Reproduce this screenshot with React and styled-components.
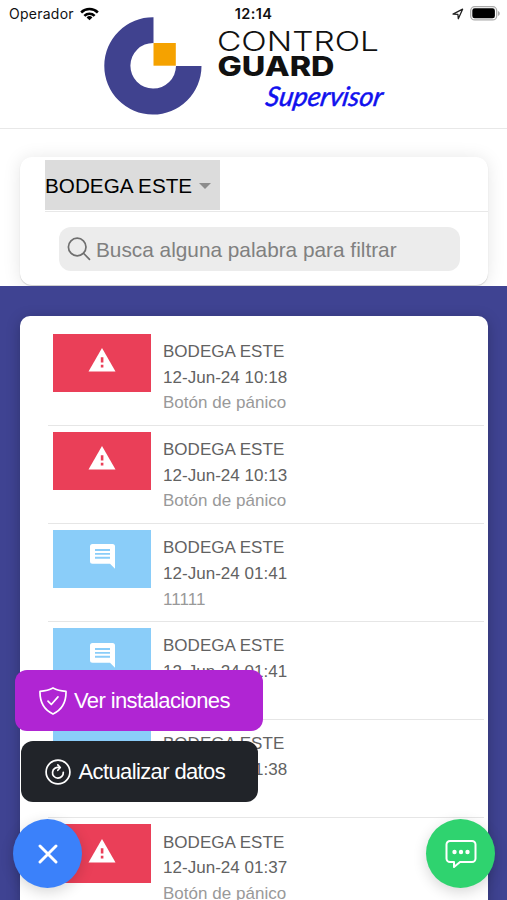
import { useState } from "react";
import styled, { createGlobalStyle } from "styled-components";

const alerts = [
  { id: 1, type: "panic", place: "BODEGA ESTE", date: "12-Jun-24 10:18", text: "Botón de pánico" },
  { id: 2, type: "panic", place: "BODEGA ESTE", date: "12-Jun-24 10:13", text: "Botón de pánico" },
  { id: 3, type: "note", place: "BODEGA ESTE", date: "12-Jun-24 01:41", text: "11111" },
  { id: 4, type: "note", place: "BODEGA ESTE", date: "12-Jun-24 01:41", text: "" },
  { id: 5, type: "note", place: "BODEGA ESTE", date: "12-Jun-24 01:38", text: "" },
  { id: 6, type: "panic", place: "BODEGA ESTE", date: "12-Jun-24 01:37", text: "Botón de pánico" },
];

const WifiIcon = () => (
  <svg width="19" height="14" viewBox="0 0 20 14">
    <g fill="none" stroke="#000" strokeWidth="2.7">
      <path d="M1.2 5.4a12.6 12.6 0 0 1 17.6 0" />
      <path d="M4.6 8.900a7.800 7.800 0 0 1 10.800 0" />
    </g>
    <path d="M10 13.600 6.900 10.600a4.400 4.400 0 0 1 6.200 0z" />
  </svg>
);

const LocationIcon = () => (
  <svg width="12" height="12" viewBox="0 0 12 12">
    <path
      d="M1 6.1 10.6 1.2 6.3 10.7 5.9 6.3z"
      fill="none"
      stroke="#222"
      strokeWidth="1.3"
      strokeLinejoin="round"
    />
  </svg>
);

const BatteryIcon = () => (
  <svg width="30" height="15" viewBox="0 0 30 15">
    <rect x="0.7" y="0.7" width="26" height="13.2" rx="4" fill="#fff" stroke="#aaa" strokeWidth="1.3" />
    <rect x="2.3" y="2.3" width="22.6" height="10" rx="2.4" />
    <path d="M28 5v5c1.100-.4 1.800-1.400 1.800-2.500S29.100 5.400 28 5z" fill="#aaa" />
  </svg>
);

const Logo = () => (
  <svg width="300" height="104" viewBox="104 16 300 104">
    <path
      d="M153.500 17.300A48.600 48.600 0 1 0 201.500 66H176A22.800 22.800 0 1 1 153.500 43z"
      fill="#40428f"
    />
    <rect x="153.500" y="43" width="22.300" height="22.700" fill="#f5a200" />
    <LogoText x="217" y="51.300" fontSize="27.500" fontWeight="300" textLength="162">
      CONTROL
    </LogoText>
    <LogoText x="217.500" y="76.300" fontSize="26.500" fontWeight="800" textLength="117">
      GUARD
    </LogoText>
    <LogoScript x="0" y="0" textLength="117" transform="translate(264.500 105.500) skewX(-10)">
      Supervisor
    </LogoScript>
  </svg>
);

const SearchIcon = () => (
  <svg width="24" height="24" viewBox="0 0 24 24" fill="none" stroke="#6f6f6f" strokeWidth="1.7" strokeLinecap="round">
    <circle cx="10.200" cy="10" r="8.800" />
    <path d="M16.700 16.500 22.500 22.300" />
  </svg>
);

const WarningIcon = () => (
  <svg width="28" height="24" viewBox="0 0 28 24">
    <path d="M14 0 27.500 23.600H.5z" fill="#fff" />
    <path d="M12.800 9.300h2.600v5.100h-2.600zM12.800 16.800h2.600v2.700h-2.600z" fill="#ea3f58" />
  </svg>
);

const CommentIcon = () => (
  <svg width="25" height="25" viewBox="0 0 25 25">
    <path d="M2.500 0h20A2.500 2.500 0 0 1 25 2.500V24.700L20 19.800H2.500A2.500 2.500 0 0 1 0 17.300V2.500A2.500 2.500 0 0 1 2.500 0z" fill="#fff" />
    <path d="M5 6h15M5 9.900h15M5 13.700h15" stroke="#8acdf9" strokeWidth="1.900" />
  </svg>
);

const ShieldIcon = () => (
  <svg width="28" height="28" viewBox="0 0 28 28" fill="none" stroke="#fff" strokeWidth="1.700" strokeLinecap="round" strokeLinejoin="round">
    <path d="M14 .9C10.500 2.800 5.800 3.900 1 4.300.700 15.200 4.500 22.600 14 27.100 23.500 22.600 27.300 15.200 27 4.300 22.200 3.900 17.500 2.800 14 .9z" />
    <path d="M9 14.100 12.300 17.500 19 9.900" />
  </svg>
);

const ReloadIcon = () => (
  <svg width="26" height="26" viewBox="0 0 26 26" fill="none" stroke="#fff" strokeWidth="1.700" strokeLinecap="round">
    <circle cx="13" cy="13" r="11.900" />
    <path d="M18.300 13.300A5.400 5.400 0 1 1 14.200 8.500" />
    <path d="M12.800 5.800 15.300 8.500 12.800 11.300" strokeLinejoin="round" />
  </svg>
);

const CloseIcon = () => (
  <svg width="20" height="20" viewBox="0 0 20 20" stroke="#fff" strokeWidth="2.900" strokeLinecap="round">
    <path d="M2 2 18 18M18 2 2 18" />
  </svg>
);

const ChatIcon = () => (
  <svg width="32" height="30" viewBox="0 0 32 30">
    <path
      d="M5 2h22a3.500 3.500 0 0 1 3.500 3.500v14A3.500 3.500 0 0 1 27 23H15l-6 5v-5H5a3.500 3.500 0 0 1-3.500-3.500v-14A3.500 3.500 0 0 1 5 2z"
      fill="none"
      stroke="#fff"
      strokeWidth="2"
      strokeLinejoin="round"
    />
    <g fill="#fff">
      <circle cx="9.500" cy="13" r="2.200" />
      <circle cx="16" cy="13" r="2.200" />
      <circle cx="22.500" cy="13" r="2.200" />
    </g>
  </svg>
);

const App = () => {
  const [word, setWord] = useState("");
  const [isopen, setIsopen] = useState(true);

  const filtered = alerts.filter((item) =>
    `${item.place} ${item.date} ${item.text}`.toLowerCase().includes(word.toLowerCase())
  );

  return (
    <Screen>
      <GlobalStyle />
      <Header>
        <Logo />
        <StatusBar>
          <Carrier>
            Operador <WifiIcon />
          </Carrier>
          <Clock>12:14</Clock>
          <StatusRight>
            <LocationIcon />
            <BatteryIcon />
          </StatusRight>
        </StatusBar>
      </Header>
      <FilterArea>
        <FilterCard>
          <SelectRow>
            <Select type="button">
              BODEGA ESTE
              <Caret />
            </Select>
          </SelectRow>
          <SearchBox>
            <SearchIcon />
            <SearchInput
              type="text"
              placeholder="Busca alguna palabra para filtrar"
              value={word}
              onChange={(e) => setWord(e.target.value)}
            />
          </SearchBox>
        </FilterCard>
      </FilterArea>
      <Content>
        <ListCard>
          {filtered.map((item) => (
            <Row key={item.id}>
              <Thumb $type={item.type}>{item.type === "panic" ? <WarningIcon /> : <CommentIcon />}</Thumb>
              <Info>
                <Line>{item.place}</Line>
                <Line>{item.date}</Line>
                <Line $light>{item.text}</Line>
              </Info>
            </Row>
          ))}
        </ListCard>
      </Content>
      {isopen && (
        <Menu>
          <MenuButton $color="#b025d3" $width={248} $gap={7}>
            <ShieldIcon />
            Ver instalaciones
          </MenuButton>
          <MenuButton $color="#212429" $width={237} $gap={8}>
            <ReloadIcon />
            Actualizar datos
          </MenuButton>
        </Menu>
      )}
      <Fab $side="left" $color="#3b81fa" onClick={() => setIsopen(!isopen)}>
        <CloseIcon />
      </Fab>
      <Fab $side="right" $color="#2fd36f">
        <ChatIcon />
      </Fab>
    </Screen>
  );
};
export default App;

const GlobalStyle = createGlobalStyle`
  * {
    box-sizing: border-box;
  }
  body {
    margin: 0;
    font-family: "Liberation Sans", Arial, sans-serif;
  }
  svg {
    display: block;
    flex-shrink: 0;
  }
`;

const Screen = styled.div`
  position: relative;
  display: flex;
  flex-direction: column;
  width: 507px;
  height: 900px;
  overflow: hidden;
  background: #fff;
`;

const Header = styled.header`
  position: relative;
  height: 129px;
  padding: 16px 0 0 104px;
  border-bottom: 1px solid #e8e8e8;
`;

const StatusBar = styled.div`
  position: absolute;
  top: 0;
  left: 0;
  width: 100%;
  height: 27px;
  padding: 0 7px 0 9px;
  display: grid;
  grid-template-columns: 1fr auto 1fr;
  align-items: center;
  font-family: Inter, sans-serif;
  font-size: 14px;
  color: #111;
`;

const Carrier = styled.div`
  display: flex;
  align-items: center;
  gap: 6px;
  letter-spacing: 0.25px;
`;

const Clock = styled.div`
  padding-right: 2px;
  font-weight: 600;
  font-size: 14.5px;
  letter-spacing: 0.4px;
`;

const StatusRight = styled.div`
  display: flex;
  justify-content: flex-end;
  align-items: center;
  gap: 6px;
`;

const LogoText = styled.text.attrs({ lengthAdjust: "spacingAndGlyphs" })`
  font-family: Inter, sans-serif;
  fill: #111;
`;

const LogoScript = styled.text.attrs({ lengthAdjust: "spacingAndGlyphs" })`
  font-family: Lato, sans-serif;
  font-size: 27px;
  font-style: italic;
  font-weight: 400;
  fill: #1010ee;
  stroke: #1010ee;
  stroke-width: 0.5px;
`;

const FilterArea = styled.div`
  height: 157px;
  padding: 28px 19px 0 20px;
  overflow: hidden;
`;

const FilterCard = styled.div`
  height: 128px;
  padding-top: 3px;
  border-radius: 12px;
  background: #fff;
  box-shadow: 0 1px 18px rgba(0, 0, 0, 0.1), 0 1px 1px rgba(0, 0, 0, 0.16);
`;

const SelectRow = styled.div`
  height: 52px;
  margin-left: 25px;
  border-bottom: 1px solid #e8e8e8;
`;

const Select = styled.button`
  display: flex;
  align-items: center;
  gap: 7px;
  width: 175px;
  height: 50px;
  padding: 1px 0 0;
  border: none;
  background: #dcdcdc;
  color: #000;
  font-family: inherit;
  font-size: 20.7px;
  white-space: nowrap;
`;

const Caret = styled.span`
  border: 6px solid transparent;
  border-top-color: #8c8c8c;
  border-bottom: none;
`;

const SearchBox = styled.label`
  display: flex;
  align-items: center;
  gap: 5px;
  width: 401px;
  height: 44px;
  margin: 15px 0 0 39px;
  padding: 0 8px;
  border-radius: 12px;
  background: #ececec;
`;

const SearchInput = styled.input`
  flex: 1;
  min-width: 0;
  padding: 2px 0 0;
  border: none;
  outline: none;
  background: none;
  font-family: inherit;
  font-size: 20.8px;
  &::placeholder {
    color: #808080;
  }
`;

const Content = styled.main`
  flex: 1;
  min-height: 0;
  padding: 30px 19px 0 20px;
  background: #3f4392;
`;

const ListCard = styled.div`
  height: 620px;
  padding: 11.500px 4px 0 28px;
  border-radius: 10px;
  background: #fff;
  box-shadow: 0 3px 14px rgba(0, 0, 0, 0.25);
`;

const Row = styled.div`
  display: flex;
  gap: 12px;
  height: 98.150px;
  padding: 6.200px 0 0 5px;
  border-bottom: 1px solid #e6e6e6;
`;

const Thumb = styled.div`
  display: flex;
  justify-content: center;
  width: 98px;
  height: 58.500px;
  padding-top: 14.500px;
  background: ${(props) => (props.$type === "panic" ? "#ea3f58" : "#8acdf9")};
`;

const Info = styled.div`
  padding-top: 5.200px;
`;

const Line = styled.div`
  height: 25.700px;
  line-height: 25.700px;
  font-size: 17px;
  letter-spacing: 0.03px;
  color: ${(props) => (props.$light ? "#999" : "#626262")};
`;

const Menu = styled.div`
  position: absolute;
  left: 15px;
  top: 670px;
  display: flex;
  flex-direction: column;
  align-items: center;
  gap: 10px;
`;

const MenuButton = styled.button`
  display: flex;
  align-items: center;
  gap: ${(props) => props.$gap}px;
  width: ${(props) => props.$width}px;
  height: 61px;
  padding: 0 0 0 24px;
  border: none;
  border-radius: 12px;
  background: ${(props) => props.$color};
  color: #fff;
  font-family: inherit;
  font-size: 22px;
  letter-spacing: -0.620px;
  white-space: nowrap;
`;

const Fab = styled.button`
  position: absolute;
  ${(props) => (props.$side === "left" ? "left: 13px;" : "right: 12px;")}
  top: 819px;
  display: flex;
  justify-content: center;
  align-items: center;
  width: 69px;
  height: 69px;
  padding: 0;
  border: none;
  border-radius: 50%;
  background: ${(props) => props.$color};
  box-shadow: 0 4px 14px rgba(0, 0, 0, 0.16);
`;
